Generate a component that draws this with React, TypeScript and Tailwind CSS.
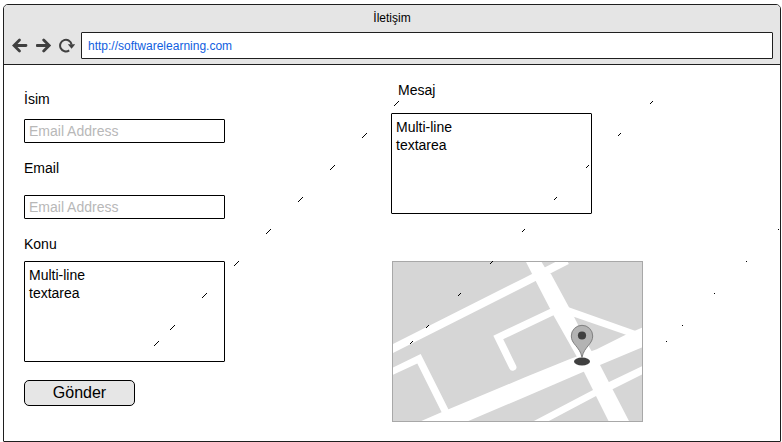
import React from "react";

const fieldClass =
  "block w-[201px] rounded-[1px] border border-black bg-white px-1 text-sm text-black outline-none placeholder:text-[#b8b8b8] placeholder:opacity-100";

type Trail = { length: number; points: [number, number][] };

// Each point is the lower left end of a dash rising to the right.
const trails: Trail[] = [
  {
    length: 5,
    points: [[154, 345], [170, 329], [202, 297], [234, 265], [266, 233], [298, 201], [330, 169], [362, 137], [394, 105]],
  },
  {
    length: 3,
    points: [[410, 343], [426, 327], [458, 295], [490, 263], [522, 231], [554, 199], [586, 167], [618, 135], [650, 103]],
  },
  {
    length: 1,
    points: [[666, 341], [682, 325], [714, 293], [746, 261], [778, 229]],
  },
];

function Dashes() {
  return (
    <svg
      className="pointer-events-none absolute top-0 left-0 h-[442px] w-[782px]"
      viewBox="0 0 782 442"
      shapeRendering="crispEdges"
      aria-hidden="true"
    >
      {trails.map((trail) =>
        trail.points.map(([x, y]) =>
          Array.from({ length: trail.length }, (_, i) => (
            <rect key={`${x}-${y}-${i}`} x={x + i} y={y - i} width="1" height="1" fill="#000" />
          )),
        ),
      )}
    </svg>
  );
}

function BackIcon() {
  return (
    <svg className="size-4" viewBox="0 0 16 16" fill="none" stroke="#404040" strokeWidth="2.8" strokeLinecap="round" aria-hidden="true">
      <path d="M2.500 7.500H14M7.500 2L2 7.500l5.500 5.500" />
    </svg>
  );
}

function ForwardIcon() {
  return (
    <svg className="size-4" viewBox="0 0 16 16" fill="none" stroke="#404040" strokeWidth="2.8" strokeLinecap="round" aria-hidden="true">
      <path d="M1 7.500H13M7.700 2L13.200 7.500l-5.500 5.500" />
    </svg>
  );
}

function ReloadIcon() {
  return (
    <svg className="size-4 overflow-visible" viewBox="0 0 16 16" fill="none" aria-hidden="true">
      <path d="M9.200 12.400A5.800 5.800 0 1 1 11.600 6.500" stroke="#404040" strokeWidth="2" />
      <path d="M7.800 6.200H15.200L11.600 10.800Z" fill="#404040" />
    </svg>
  );
}

function StreetMap() {
  return (
    <svg
      className="block h-[161px] w-[251px]"
      viewBox="0 0 251 161"
      role="img"
      aria-label="Harita"
    >
      <rect width="251" height="161" fill="#d6d6d6" />
      <g fill="#fff">
        <path d="M-2 89L133 21L175 -0.5" fill="none" stroke="#fff" strokeWidth="8" />
        <path d="M133.5 0L143.7 20L161.3 54L185 96L192 111L217 161H237.5L208 104L197 85.7L182 55.7L177 46.3L159 13L155 10L149 0Z" />
        <path d="M27 161L50 151L133 116.3L178 98L204.7 88.3L234.7 73.3L251 66.3V86L208 104L191 111L133 136L74 161Z" />
        <path d="M0 107L28.7 93L57 149.5L50 152L25.3 102.5L0 114.3Z" />
        <path d="M120.7 106L106.3 76.5L161 50.5" fill="none" stroke="#fff" strokeWidth="7.4" strokeLinecap="round" />
        <path d="M176 46L243.7 70L234.7 74L181 55.5Z" />
        <path d="M140 161L201 129L217 121L251 104.7V113L221 128L205 134.5L155 161Z" />
      </g>
      <ellipse cx="190" cy="100.5" rx="8" ry="4" fill="#404040" />
      <path
        d="M190 96.5C189 91 186.5 88 183.5 84.3C181 81.3 179.3 78.8 179.3 75A10.7 10.7 0 0 1 200.7 75C200.7 78.8 199 81.3 196.5 84.3C193.5 88 191 91 190 96.5Z"
        fill="#b3b3b3"
        stroke="#808080"
      />
      <circle cx="190" cy="74.5" r="4.1" fill="#404040" />
      <rect x="0.5" y="0.5" width="250" height="160" fill="none" stroke="#a8a8a8" />
    </svg>
  );
}

export default function App() {
  return (
    <div className="relative bg-white pt-1 pr-px pl-[3px] font-['Liberation_Sans',Arial,sans-serif] text-black">
      <div className="overflow-hidden rounded-t-[5px] rounded-b-[1px] border border-[#1f1f1f] bg-white">
        <header className="border-b border-[#1f1f1f] bg-[#e5e5e5] pb-[5px]">
          <h1 className="h-[27px] text-center text-xs leading-[26px]">İletişim</h1>
          <div className="flex items-center gap-2 pr-[7px] pl-2">
            <button type="button" aria-label="Geri">
              <BackIcon />
            </button>
            <button type="button" aria-label="İleri">
              <ForwardIcon />
            </button>
            <button type="button" aria-label="Yenile" className="-mr-[3px]">
              <ReloadIcon />
            </button>
            <input
              type="text"
              aria-label="Adres"
              defaultValue="http://softwarelearning.com"
              className="h-[27px] min-w-0 flex-1 rounded-[1px] border border-[#1f1f1f] bg-white px-1.5 text-xs text-[#1060e0] outline-none"
            />
          </div>
        </header>

        <main className="grid grid-cols-2 pr-[22px] pb-[19px] pl-5">
          <form className="pt-[26px]" onSubmit={(e) => e.preventDefault()}>
            <label htmlFor="isim" className="mb-3 block text-sm leading-4">İsim</label>
            <input id="isim" type="text" placeholder="Email Address" className={`${fieldClass} h-6`} />
            <label htmlFor="email" className="mt-[17px] mb-[19px] block text-sm leading-4">Email</label>
            <input id="email" type="text" placeholder="Email Address" className={`${fieldClass} h-6`} />
            <label htmlFor="konu" className="mt-[17px] mb-[9px] block text-sm leading-4">Konu</label>
            <textarea
              id="konu"
              defaultValue={"Multi-line\ntextarea"}
              className={`${fieldClass} h-[101px] resize-none pt-1 leading-[18px]`}
            />
            <button
              type="submit"
              className="mt-[18px] block h-[26px] w-[111px] rounded-[5px] border border-black bg-[#e6e6e6] text-base leading-6"
            >
              Gönder
            </button>
          </form>

          <section className="pt-[17px]">
            <label htmlFor="mesaj" className="mb-[15px] block pl-[7px] text-sm leading-4">Mesaj</label>
            <textarea
              id="mesaj"
              defaultValue={"Multi-line\ntextarea"}
              className={`${fieldClass} h-[101px] resize-none pt-1 leading-[18px]`}
            />
            <div className="mt-[47px] ml-px">
              <StreetMap />
            </div>
          </section>
        </main>
      </div>
      <Dashes />
    </div>
  );
}
